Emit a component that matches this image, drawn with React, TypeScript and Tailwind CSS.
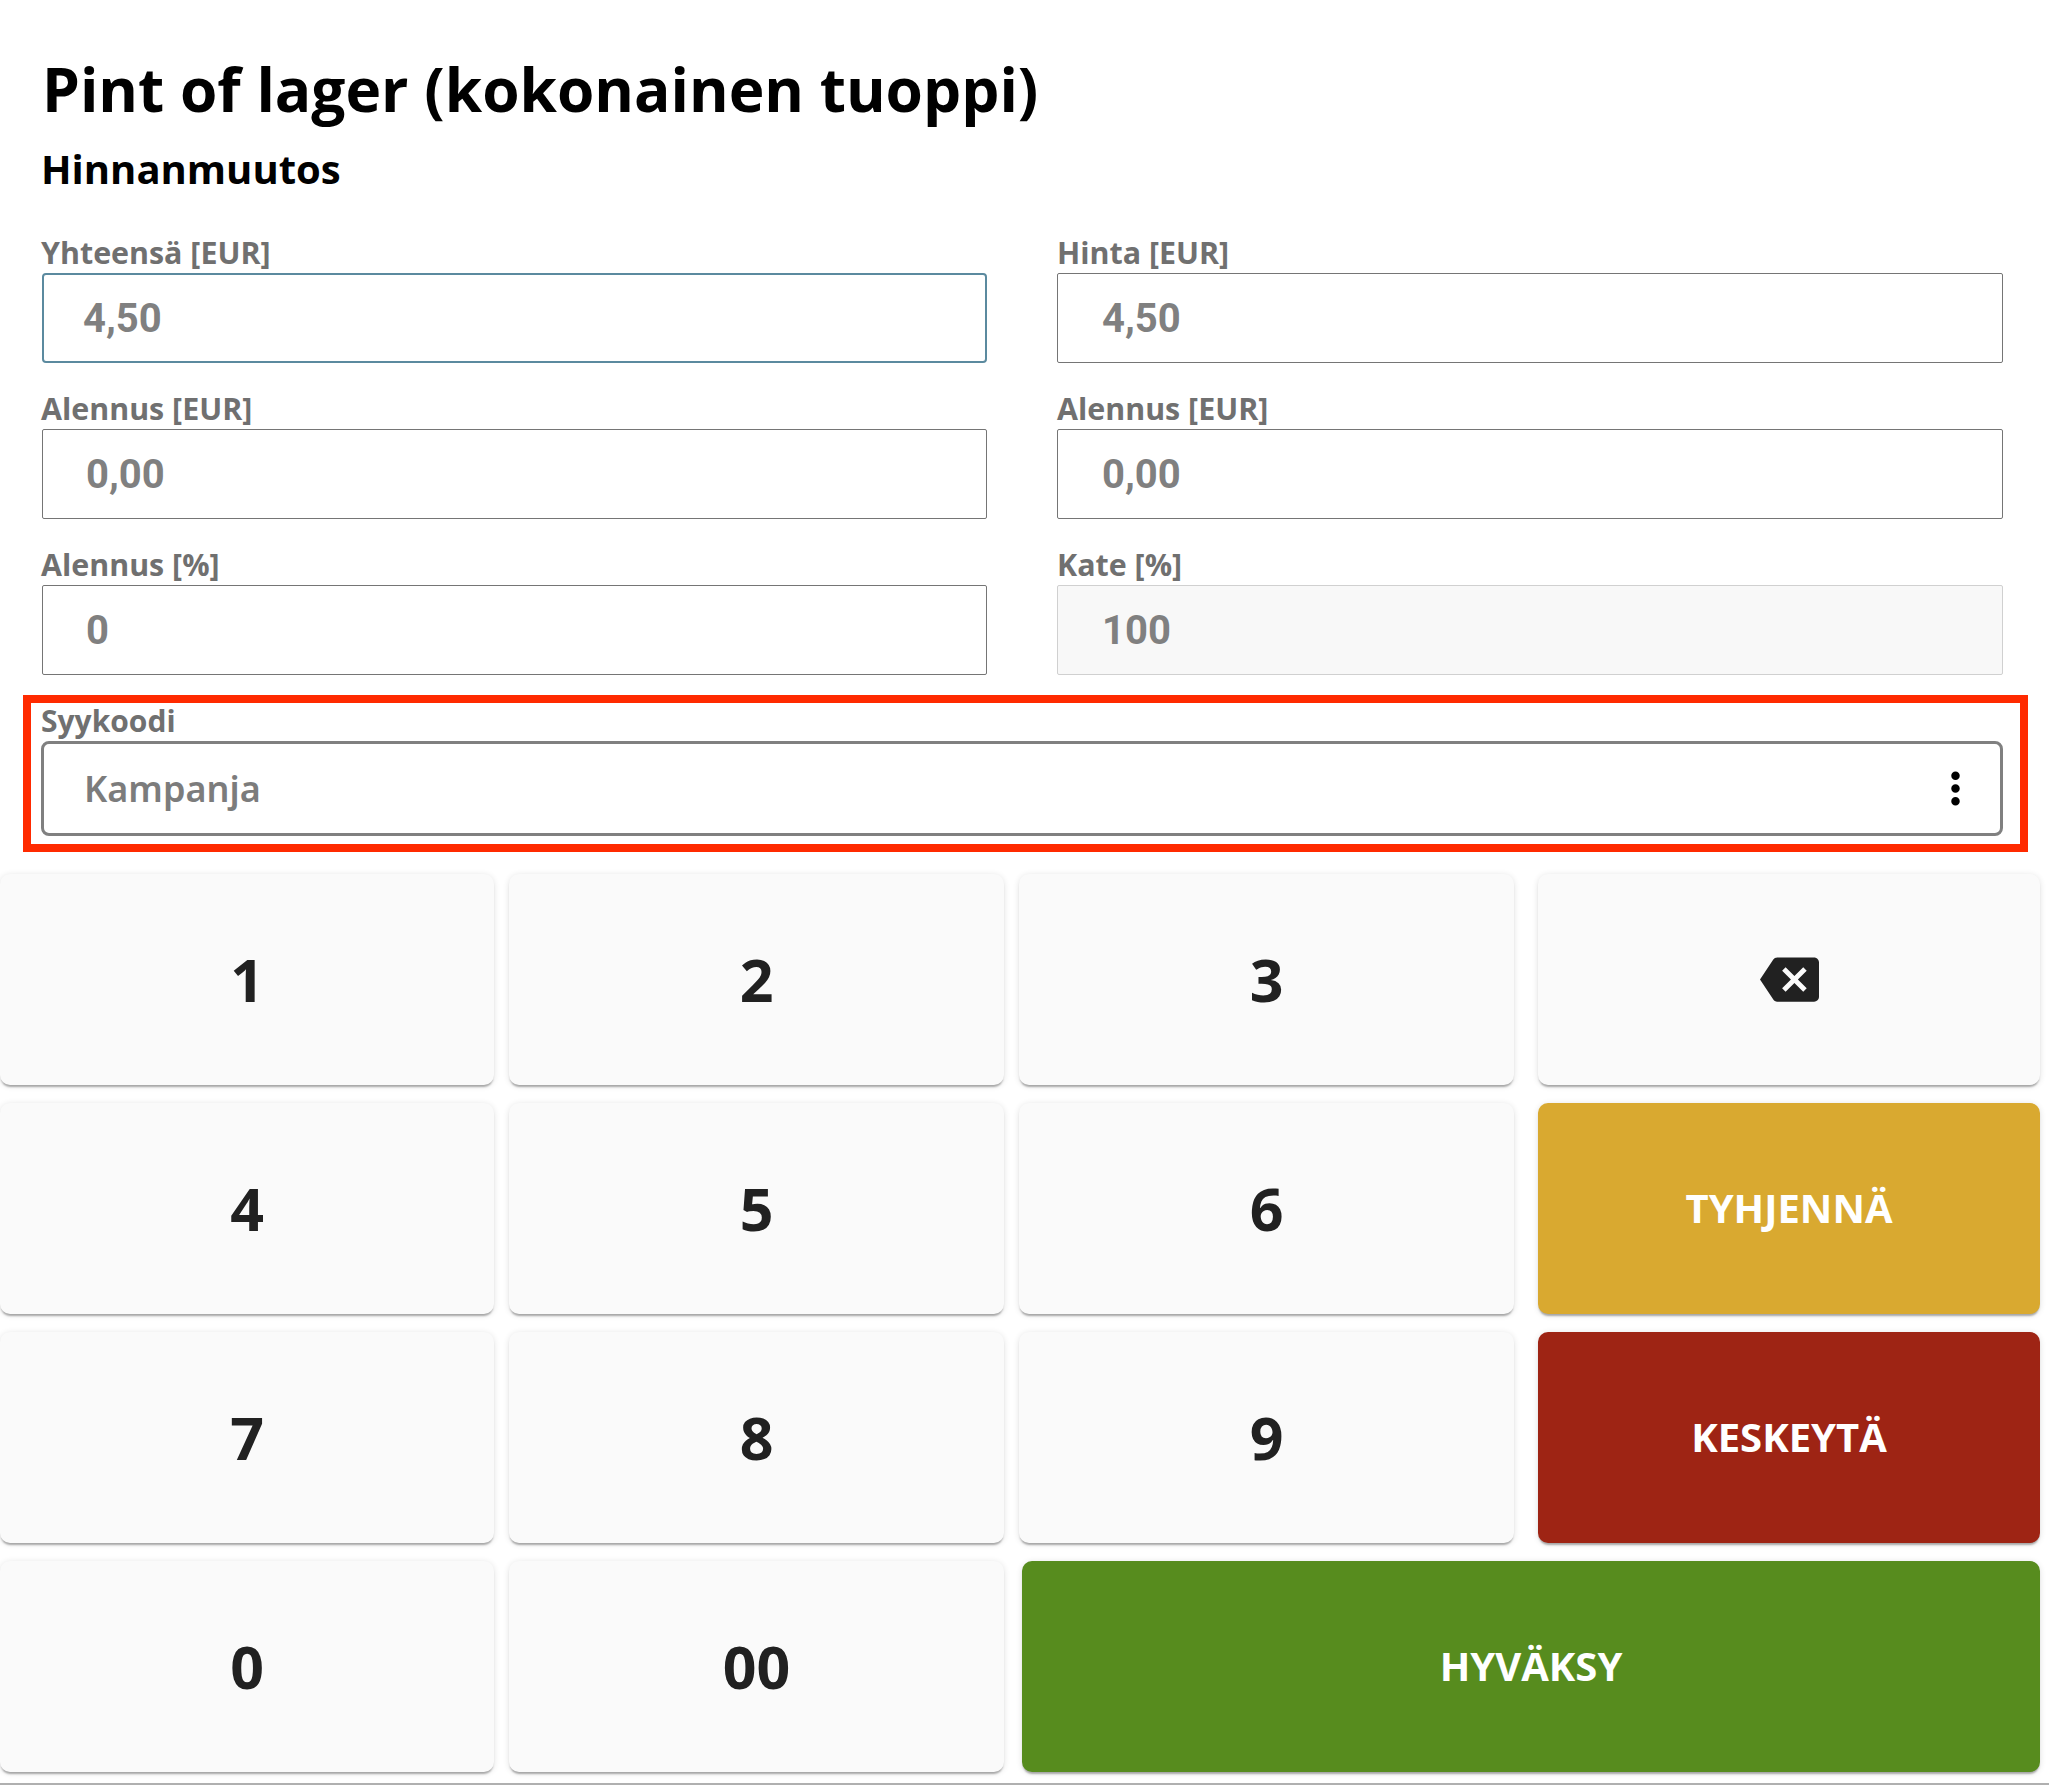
const Field = ({
  label,
  value,
  focused,
  disabled,
  textInset = "pl-[44px]",
  labelOffset = "-ml-[1px]",
}: {
  label: string;
  value: string;
  focused?: boolean;
  disabled?: boolean;
  textInset?: string;
  labelOffset?: string;
}) => {
  const border = focused
    ? "rounded-[4px] border-2 border-[#5b8a9f]"
    : disabled
      ? "rounded-[2px] border border-[#d0d0d0] bg-[#f8f8f8]"
      : "rounded-[2px] border border-[#757575]";

  return (
    <div className="flex flex-col">
      <label className={`${labelOffset} mb-[3px] h-[36px] pt-[1px] text-[30.4px] leading-[36px] font-bold text-[#707070]`}>
        {label}
      </label>
      <div className={`flex h-[90px] items-center ${border} ${textInset}`}>
        <span className="pt-[2px] font-['Roboto'] text-[40px] font-bold text-[#808080]">{value}</span>
      </div>
    </div>
  );
};

const KeyButton = ({ children, className }: { children: React.ReactNode; className?: string }) => (
  <button
    className={`flex h-[211px] items-center justify-center rounded-[10px] shadow-[0_3px_2px_-1px_rgba(0,0,0,0.3),0_1px_6px_0_rgba(0,0,0,0.12)] ${className ?? "bg-[#fafafa] pb-[1px] text-[59px] font-bold text-[#212121]"}`}
  >
    {children}
  </button>
);

const ActionButton = ({ label, className }: { label: string; className: string }) => (
  <KeyButton className={`pb-[2px] text-[40px] font-bold text-white ${className}`}>{label}</KeyButton>
);

const App = () => {
  return (
    <div className="relative flex h-[1785px] w-[2049px] flex-col overflow-hidden border-b-[2px] border-[#b0b0b0] bg-white font-['Open_Sans',sans-serif]">
      <div className="pl-[42px] pt-[49px]">
        <h1 className="text-[60.4px] leading-[80px] font-bold text-black">Pint of lager (kokonainen tuoppi)</h1>
        <h2 className="mt-[16px] -ml-[1px] text-[40px] leading-[48px] font-bold text-black">Hinnanmuutos</h2>
      </div>

      <div className="mt-[41px] grid grid-cols-[945px_946px] gap-x-[70px] gap-y-[27px] px-[42px]">
        <Field label="Yhteensä [EUR]" value="4,50" focused textInset="pl-[39px]" />
        <Field label="Hinta [EUR]" value="4,50" labelOffset="ml-0" />
        <Field label="Alennus [EUR]" value="0,00" textInset="pl-[43px]" />
        <Field label="Alennus [EUR]" value="0,00" labelOffset="ml-0" />
        <Field label="Alennus [%]" value="0" textInset="pl-[43px]" />
        <Field label="Kate [%]" value="100" disabled labelOffset="ml-0" />
      </div>

      <div className="mt-[20px] ml-[23px] h-[157px] w-[2005px] border-[8px] border-[#ff2a00] pl-[10px] pr-[17px]">
        <div className="h-[38px] text-[30px] leading-[36px] font-bold text-[#707070]">Syykoodi</div>
        <div className="flex h-[95px] items-center justify-between rounded-[8px] border-[3px] border-[#808080] pl-[40px] pr-[19px]">
          <span className="font-['Noto_Sans'] text-[36px] font-semibold text-[#7c7c7c]">Kampanja</span>
          <svg viewBox="0 0 24 24" className="h-[51px] w-[51px] fill-black">
            <path d="M12 8c1.1 0 2-.9 2-2s-.9-2-2-2-2 .9-2 2 .9 2 2 2zm0 2c-1.1 0-2 .9-2 2s.9 2 2 2 2-.9 2-2-.9-2-2-2zm0 6c-1.1 0-2 .9-2 2s.9 2 2 2 2-.9 2-2-.9-2-2-2z" />
          </svg>
        </div>
      </div>

      <div className="mt-[22px] grid grid-cols-[494px_495px_495px_511px] gap-x-[15px] gap-y-[18px] pr-[9px]">
        <KeyButton>1</KeyButton>
        <KeyButton>2</KeyButton>
        <KeyButton>3</KeyButton>
        <KeyButton className="ml-[9px] bg-[#fafafa]">
          <svg viewBox="0 0 24 24" className="h-[59px] w-[59px] fill-[#212121]">
            <path d="M22 3H7c-.69 0-1.23.35-1.59.88L0 12l5.41 8.11c.36.53.9.89 1.59.89h15c1.1 0 2-.9 2-2V5c0-1.1-.9-2-2-2zm-3 12.59L17.59 17 14 13.41 10.41 17 9 15.59 12.59 12 9 8.41 10.41 7 14 10.59 17.59 7 19 8.41 15.41 12 19 15.59z" />
          </svg>
        </KeyButton>

        <KeyButton>4</KeyButton>
        <KeyButton>5</KeyButton>
        <KeyButton>6</KeyButton>
        <ActionButton label="TYHJENNÄ" className="ml-[9px] bg-[#d9a930]" />

        <KeyButton>7</KeyButton>
        <KeyButton>8</KeyButton>
        <KeyButton>9</KeyButton>
        <ActionButton label="KESKEYTÄ" className="ml-[9px] bg-[#9e2414]" />

        <KeyButton>0</KeyButton>
        <KeyButton>00</KeyButton>
        <ActionButton label="HYVÄKSY" className="col-span-2 ml-[3px] bg-[#578c1e]" />
      </div>
    </div>
  );
};

export default App;
